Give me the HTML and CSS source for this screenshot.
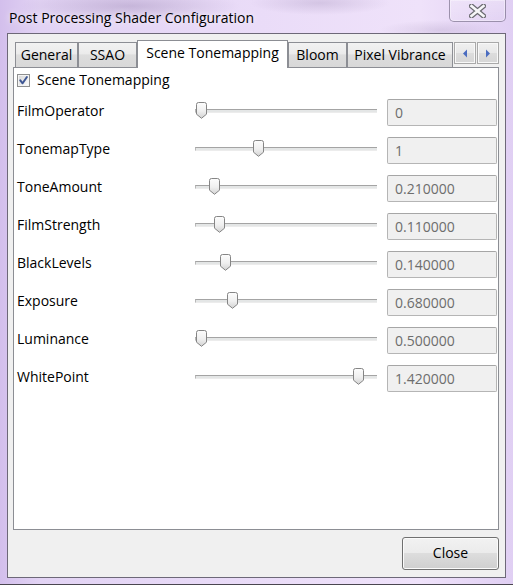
FILE: index.html
```html
<!DOCTYPE html>
<html>
<head>
<meta charset="utf-8">
<link rel="stylesheet" href="styles.css">
</head>
<body>
<div class="window">
  <div class="titlebar">
    <span class="title">Post Processing Shader Configuration</span>
    <div class="win-close">
      <svg width="17" height="14" viewBox="0 0 17 14">
        <path d="M2.5,2 L14.5,12 M14.5,2 L2.5,12" stroke="#6a6a70" stroke-width="5" stroke-linecap="square" fill="none"/>
        <path d="M2.5,2 L14.5,12 M14.5,2 L2.5,12" stroke="#f6f6f8" stroke-width="2.6" stroke-linecap="square" fill="none"/>
      </svg>
    </div>
  </div>
  <div class="client">
    <div class="tabwidget">
      <div class="tabbar">
        <div class="tab tab-general">General</div>
        <div class="tab tab-ssao">SSAO</div>
        <div class="tab tab-scene selected">Scene Tonemapping</div>
        <div class="tab tab-bloom">Bloom</div>
        <div class="tab tab-pixel">Pixel Vibrance</div>
        <div class="tab-scroll">
          <span class="arrow-btn"><svg width="6" height="9" viewBox="0 0 6 9"><path d="M5,0.5 L5,8.5 L1,4.5 Z" fill="#4a6cc0"/></svg></span>
          <span class="arrow-btn"><svg width="6" height="9" viewBox="0 0 6 9"><path d="M1,0.5 L1,8.5 L5,4.5 Z" fill="#4a6cc0"/></svg></span>
        </div>
      </div>
      <div class="pane">
        <div class="check">
          <span class="box">
            <svg width="13" height="13" viewBox="0 0 13 13">
              <defs><linearGradient id="cb" x1="0" y1="0" x2="1" y2="1"><stop offset="0" stop-color="#d8d8d8"/><stop offset="1" stop-color="#fbfbfb"/></linearGradient></defs>
              <rect x="0.5" y="0.5" width="12" height="12" fill="#f4f4f4" stroke="#8e8f8f"/>
              <rect x="2" y="2" width="9" height="9" fill="url(#cb)"/>
              <path d="M3.3,6.4 L5.6,9.3 L9.9,3" stroke="#3f5794" stroke-width="2" fill="none" stroke-linecap="round" stroke-linejoin="round"/>
            </svg>
          </span>
          <span class="check-label">Scene Tonemapping</span>
        </div>
        <div class="rows">
          <div class="row">
            <span class="label">FilmOperator</span>
            <div class="slider"><div class="groove"></div><span class="thumb" style="left:1px"></span></div>
            <div class="field">0</div>
          </div>
          <div class="row">
            <span class="label">TonemapType</span>
            <div class="slider"><div class="groove"></div><span class="thumb" style="left:58px"></span></div>
            <div class="field">1</div>
          </div>
          <div class="row">
            <span class="label">ToneAmount</span>
            <div class="slider"><div class="groove"></div><span class="thumb" style="left:14px"></span></div>
            <div class="field">0.210000</div>
          </div>
          <div class="row">
            <span class="label">FilmStrength</span>
            <div class="slider"><div class="groove"></div><span class="thumb" style="left:19px"></span></div>
            <div class="field">0.110000</div>
          </div>
          <div class="row">
            <span class="label">BlackLevels</span>
            <div class="slider"><div class="groove"></div><span class="thumb" style="left:25px"></span></div>
            <div class="field">0.140000</div>
          </div>
          <div class="row">
            <span class="label">Exposure</span>
            <div class="slider"><div class="groove"></div><span class="thumb" style="left:32px"></span></div>
            <div class="field">0.680000</div>
          </div>
          <div class="row">
            <span class="label">Luminance</span>
            <div class="slider"><div class="groove"></div><span class="thumb" style="left:1px"></span></div>
            <div class="field">0.500000</div>
          </div>
          <div class="row">
            <span class="label">WhitePoint</span>
            <div class="slider"><div class="groove"></div><span class="thumb" style="left:158px"></span></div>
            <div class="field">1.420000</div>
          </div>
        </div>
      </div>
    </div>
    <div class="footer">
      <button class="btn">Close</button>
    </div>
  </div>
</div>
</body>
</html>
```

FILE: styles.css
```css
html, body {
  margin: 0;
  padding: 0;
}
body {
  width: 513px;
  height: 585px;
  overflow: hidden;
  font-family: "Open Sans", "Noto Sans", sans-serif;
  font-size: 14px;
  color: #000;
}
.window {
  width: 513px;
  height: 585px;
  box-sizing: border-box;
  border-bottom: 1px solid #4a4650;
  display: flex;
  flex-direction: column;
  background:
    radial-gradient(ellipse 110px 16px at 130px 6px, rgba(140, 120, 165, 0.35), transparent),
    radial-gradient(ellipse 70px 12px at 320px 3px, rgba(140, 120, 165, 0.25), transparent),
    radial-gradient(ellipse 60px 10px at 440px 30px, rgba(140, 120, 165, 0.2), transparent),
    linear-gradient(to right, #d3bfec 0px, #e2d3f4 40px, #eadcf8 260px, #efe2fa 420px, #e0cff3 513px);
}
.titlebar {
  height: 33px;
  flex: none;
  display: flex;
  justify-content: space-between;
  align-items: flex-start;
  padding: 0 7px 0 9px;
}
.title {
  align-self: center;
  font-size: 14px;
  margin-top: 1px;
  text-shadow: 0 0 6px rgba(255, 255, 255, 0.9);
}
.win-close {
  width: 57px;
  height: 22px;
  box-sizing: border-box;
  border: 1px solid rgba(90, 80, 110, 0.55);
  border-top: none;
  border-radius: 0 0 5px 5px;
  background: linear-gradient(to bottom, rgba(255, 255, 255, 0.25), rgba(255, 255, 255, 0.05));
  box-shadow: inset 0 0 0 1px rgba(255, 255, 255, 0.35);
  display: flex;
  align-items: center;
  justify-content: center;
}
.client {
  flex: none;
  height: 545px;
  margin: 0 7px;
  box-sizing: border-box;
  border: 1px solid #6d6878;
  background: #f0f0f0;
  padding: 6px 6px 7px 5px;
  display: flex;
  flex-direction: column;
}
.tabwidget {
  display: flex;
  flex-direction: column;
}
.tabbar {
  height: 27px;
  display: flex;
  align-items: flex-end;
  position: relative;
  z-index: 1;
}
.tab {
  flex: none;
  height: 25px;
  box-sizing: border-box;
  border: 1px solid #8c8e94;
  border-bottom: none;
  background: linear-gradient(to bottom, #f2f2f2 0%, #ebebeb 45%, #dddddd 50%, #d8d8d8 100%);
  display: flex;
  align-items: center;
  justify-content: center;
  padding-bottom: 1px;
  white-space: nowrap;
}
.tab-general { width: 63px; margin-left: 2px; }
.tab-ssao { width: 59px; }
.tab-scene { width: 151px; }
.tab-bloom { width: 59px; }
.tab-pixel { width: 106px; }
.tab.selected {
  height: 28px;
  margin-bottom: -1px;
  background: #ffffff;
  padding-bottom: 4px;
}
.tab-scroll {
  margin-left: auto;
  align-self: flex-start;
  margin-top: 2px;
  display: flex;
  gap: 1px;
}
.arrow-btn {
  width: 22px;
  height: 22px;
  box-sizing: border-box;
  border: 1px solid #a9a9a9;
  box-shadow: inset 0 0 0 1px #f8f8f8;
  background: linear-gradient(to bottom, #f0f0f0 0%, #e8e8e8 50%, #dcdcdc 51%, #d6d6d6 100%);
  display: flex;
  align-items: center;
  justify-content: center;
}
.pane {
  height: 463px;
  box-sizing: border-box;
  border: 1px solid #8c8e94;
  background: #ffffff;
  padding: 3px 1px 0 3px;
}
.check {
  height: 17px;
  display: flex;
  align-items: center;
  gap: 7px;
}
.box {
  display: flex;
  margin-top: 1px;
}
.rows {
  margin-top: 11px;
  display: flex;
  flex-direction: column;
  gap: 11px;
}
.row {
  display: grid;
  grid-template-columns: 178px 182px 120px;
  column-gap: 0;
  height: 27px;
  align-items: center;
}
.label {
  margin-top: -4px;
}
.slider {
  position: relative;
  height: 27px;
}
.groove {
  position: absolute;
  left: 0;
  right: 0;
  top: 10px;
  height: 4px;
  box-sizing: border-box;
  border-top: 1px solid #a4a4a4;
  border-left: 1px solid #b8b8b8;
  border-bottom: 1px solid #ececec;
  background: #e4e6e6;
}
.thumb {
  position: absolute;
  top: 3px;
  width: 11px;
  height: 17px;
  background: url("data:image/svg+xml;utf8,<svg xmlns='http://www.w3.org/2000/svg' width='11' height='17' viewBox='0 0 11 17'><defs><linearGradient id='g' x1='0' y1='0' x2='0' y2='1'><stop offset='0' stop-color='%23fdfdfd'/><stop offset='0.55' stop-color='%23efefef'/><stop offset='1' stop-color='%23d2d2d2'/></linearGradient></defs><path d='M0.5,2.5 Q0.5,0.5 2.5,0.5 H8.5 Q10.5,0.5 10.5,2.5 V12.2 L5.5,16.3 L0.5,12.2 Z' fill='url(%23g)' stroke='%23858585'/></svg>") no-repeat;
}
.field {
  margin-left: 10px;
  height: 27px;
  box-sizing: border-box;
  border: 1px solid #b5b5b5;
  border-top-color: #a6a6a6;
  border-radius: 2px;
  background: #f0f0f0;
  color: #6d6d6d;
  padding-left: 7px;
  display: flex;
  align-items: center;
}
.footer {
  margin-top: 7px;
  display: flex;
  justify-content: flex-end;
}
.btn {
  width: 97px;
  height: 33px;
  box-sizing: border-box;
  border: 1px solid #707070;
  border-radius: 3px;
  box-shadow: inset 0 0 0 1px #fbfbfb;
  background: linear-gradient(to bottom, #f2f2f2 0%, #ebebeb 48%, #dddddd 50%, #cfcfcf 100%);
  font-family: "Open Sans", "Noto Sans", sans-serif;
  font-size: 14px;
  color: #000;
  padding: 0 0 2px 0;
}
```
